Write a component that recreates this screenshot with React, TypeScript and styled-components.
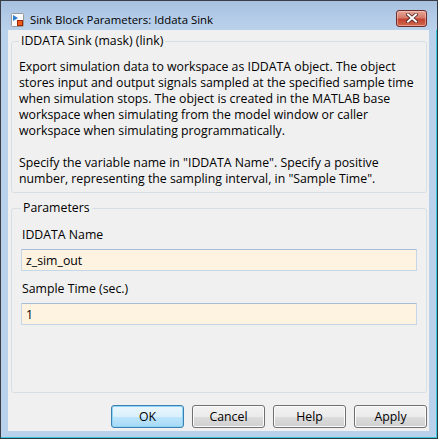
import React from 'react';
import styled, { createGlobalStyle } from 'styled-components';

const GlobalStyle = createGlobalStyle`
  html, body {
    margin: 0;
    padding: 0;
    background: #ffffff;
  }
  body {
    font-family: "Segoe UI", "Open Sans", "Noto Sans", sans-serif;
    font-size: 12.3px;
    color: #000;
  }
`;

const DESCRIPTION = [
  'Export simulation data to workspace as IDDATA object. The object',
  'stores input and output signals sampled at the specified sample time',
  'when simulation stops. The object is created in the MATLAB base',
  'workspace when simulating from the model window or caller',
  'workspace when simulating programmatically.',
  '',
  'Specify the variable name in "IDDATA Name". Specify a positive',
  'number, representing the sampling interval, in "Sample Time".',
];

const BlockIcon = () => (
  <svg width="13" height="14" viewBox="0 0 13 14">
    <rect x="0.5" y="0.5" width="12" height="13" rx="1" fill="#fbfbfb" stroke="#9a9a9a" />
    <path d="M2 2 L7 5 L2 8 Z" fill="#2f7fd0" />
    <rect x="6.5" y="7.5" width="5" height="5" fill="#f05a1a" stroke="#9c2a0a" />
  </svg>
);

const CloseGlyph = () => (
  <svg width="12" height="10" viewBox="0 0 12 10">
    <path d="M2 1.5 L10 8.5 M10 1.5 L2 8.5" stroke="#4a2020" strokeWidth="3.6" strokeLinecap="square" />
    <path d="M2 1.5 L10 8.5 M10 1.5 L2 8.5" stroke="#ffffff" strokeWidth="2" strokeLinecap="square" />
  </svg>
);

const App = () => {
  return (
    <>
      <GlobalStyle />
      <Window>
        <TitleBar>
          <BlockIcon />
          <TitleText>Sink Block Parameters: Iddata Sink</TitleText>
          <CloseButton aria-label="Close">
            <CloseGlyph />
          </CloseButton>
        </TitleBar>
        <Client>
          <GroupBox>
            <GroupTitle>IDDATA Sink (mask) (link)</GroupTitle>
            <Description>
              {DESCRIPTION.map((line, i) => (
                <DescLine key={i}>{line || '\u00a0'}</DescLine>
              ))}
            </Description>
          </GroupBox>
          <ParamsBox>
            <GroupTitle>Parameters</GroupTitle>
            <Fields>
              <FieldLabel>IDDATA Name</FieldLabel>
              <TextInput defaultValue="z_sim_out" />
              <FieldLabel $spaced>Sample Time (sec.)</FieldLabel>
              <TextInput defaultValue="1" />
            </Fields>
          </ParamsBox>
          <ButtonRow>
            <DialogButton $primary>OK</DialogButton>
            <DialogButton>Cancel</DialogButton>
            <DialogButton>Help</DialogButton>
            <DialogButton>Apply</DialogButton>
          </ButtonRow>
        </Client>
      </Window>
    </>
  );
};

export default App;

const Window = styled.div`
  box-sizing: border-box;
  width: 438px;
  height: 439px;
  display: flex;
  flex-direction: column;
  border: 1px solid #3a3f46;
  border-right-color: #2f3a40;
  border-bottom-color: #2f3a40;
  background: #b9d1ea;
  box-shadow: inset -1px -1px 0 #3cc6da;
  padding: 0 8px 7px 7px;
`;

const TitleBar = styled.div`
  height: 29px;
  margin: 0 -8px 0 -7px;
  padding: 8px 10px 0 10px;
  box-sizing: border-box;
  display: flex;
  align-items: center;
  gap: 6px;
  background: linear-gradient(#a6c0df, #b4cce8 60%, #b9d1ea);
`;

const TitleText = styled.span`
  flex: 1;
  font-size: 11.4px;
  line-height: 16px;
  color: #000;
  white-space: nowrap;
`;

const CloseButton = styled.button`
  width: 31px;
  height: 17px;
  margin-top: -3px;
  padding: 0;
  display: flex;
  align-items: center;
  justify-content: center;
  border: 1px solid #6b2d2d;
  border-radius: 3px;
  background: linear-gradient(#e7a899, #d47a68 45%, #c2432f 55%, #d2674f);
  box-shadow: inset 0 0 0 1px rgba(255, 210, 200, 0.5);
`;

const Client = styled.div`
  flex: 1;
  display: flex;
  flex-direction: column;
  background: #f0f0f0;
  padding: 3px 2px 3px 3px;
  min-height: 0;
`;

const GroupBox = styled.fieldset`
  margin: 0;
  min-width: 0;
  padding: 10px 7px 5px 7px;
  border: 1px solid #d5dfe5;
  border-radius: 3px;
`;

const ParamsBox = styled(GroupBox)`
  flex: 1;
  margin-top: 7px;
  padding: 11px 9px 0 9px;
`;

const GroupTitle = styled.legend`
  padding: 0 2px;
  margin-left: 0;
  font-size: 12.3px;
  line-height: 16px;
  color: #000;
`;

const Description = styled.div`
  display: flex;
  flex-direction: column;
`;

const DescLine = styled.div`
  font-size: 12.3px;
  line-height: 16px;
  white-space: nowrap;
`;

const Fields = styled.div`
  display: flex;
  flex-direction: column;
`;

const FieldLabel = styled.label<{ $spaced?: boolean }>`
  display: block;
  margin: ${({ $spaced }) => ($spaced ? '10px' : '0')} 0 6px 1px;
  font-size: 12.3px;
  line-height: 16px;
`;

const TextInput = styled.input`
  box-sizing: border-box;
  height: 22px;
  width: 100%;
  margin: 0;
  padding: 0 4px;
  border: 1px solid #c5d6e6;
  border-top-color: #a7bed6;
  border-radius: 1px;
  background: #fef3e0;
  font-family: "Segoe UI", "Open Sans", "Noto Sans", sans-serif;
  font-size: 12.3px;
  color: #000;
  outline: none;
`;

const ButtonRow = styled.div`
  display: flex;
  justify-content: flex-end;
  gap: 8px;
  margin-top: 12px;
  height: 23px;
`;

const DialogButton = styled.button<{ $primary?: boolean }>`
  width: 73px;
  height: 23px;
  padding: 0;
  border-radius: 3px;
  font-family: "Segoe UI", "Open Sans", "Noto Sans", sans-serif;
  font-size: 12.3px;
  color: #000;
  border: 1px solid ${({ $primary }) => ($primary ? '#3c7fb1' : '#707070')};
  background: ${({ $primary }) =>
    $primary
      ? 'linear-gradient(#eaf6fd, #d9f0fc 50%, #bee6fd 50%, #a7d9f5)'
      : 'linear-gradient(#f2f2f2, #ebebeb 50%, #dddddd 50%, #cfcfcf)'};
  box-shadow: inset 0 0 0 1px ${({ $primary }) => ($primary ? '#8ed4f7' : '#fcfcfc')};
`;
